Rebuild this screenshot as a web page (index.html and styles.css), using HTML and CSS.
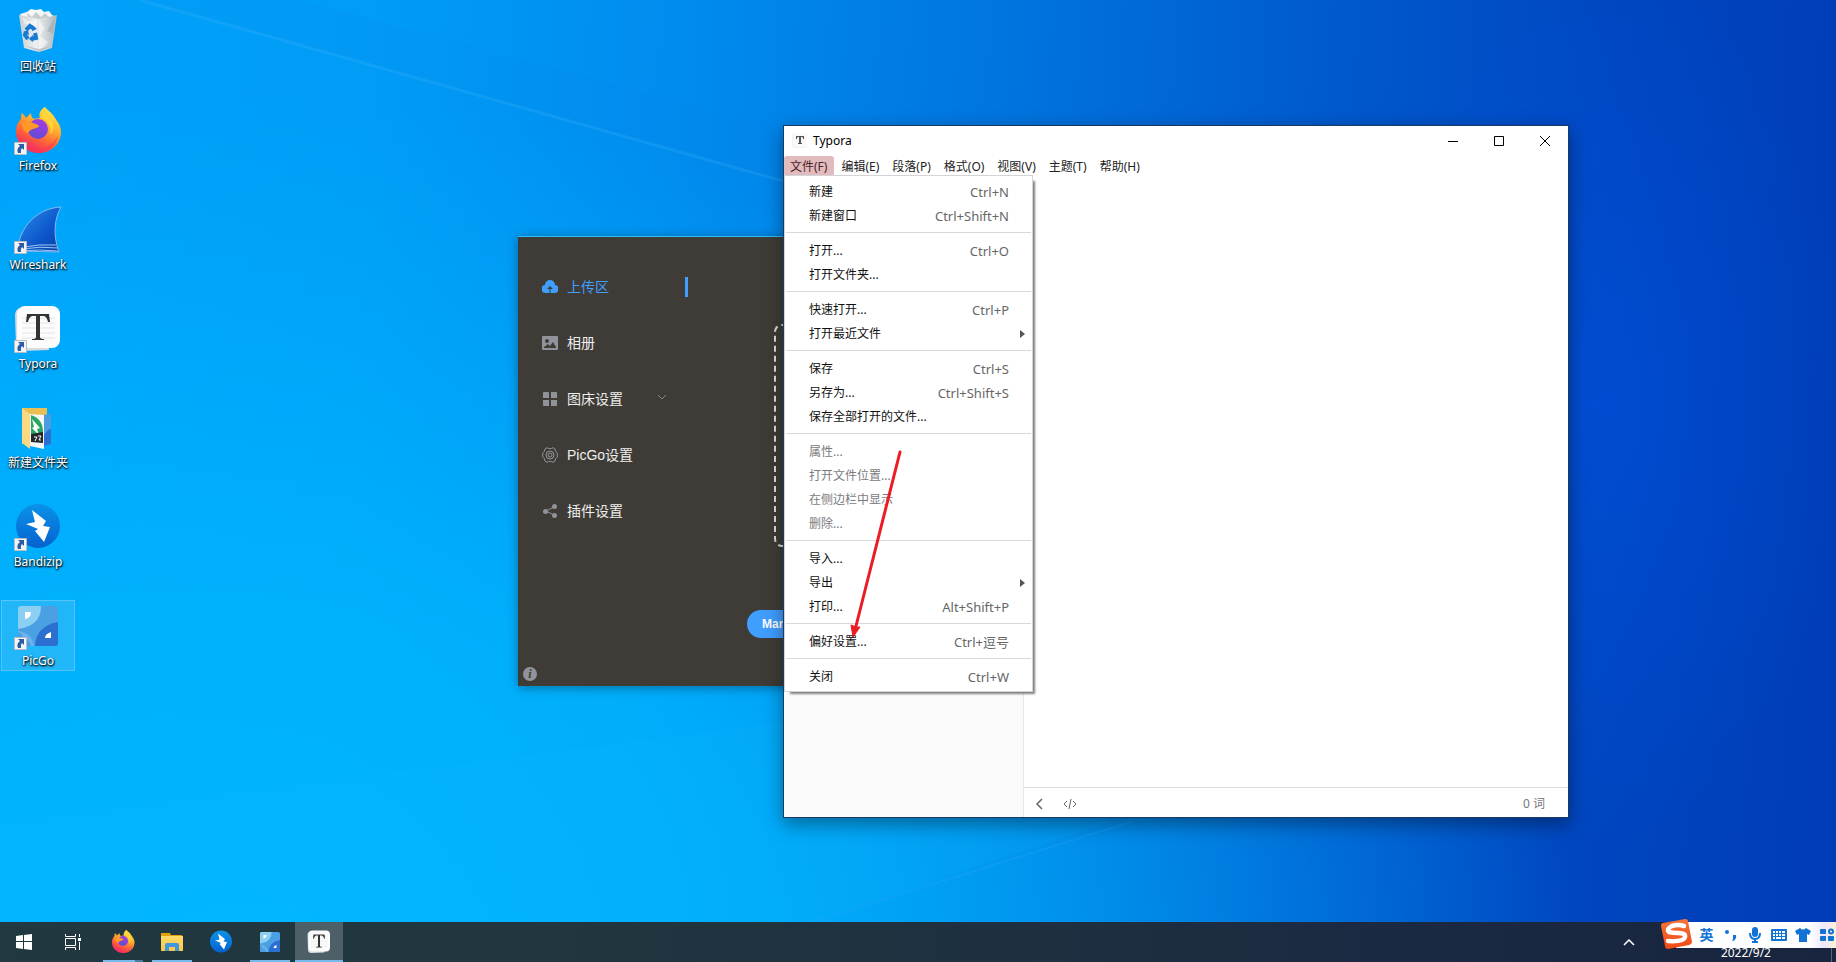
FILE: index.html
```html
<!DOCTYPE html>
<html lang="zh-CN">
<head>
<meta charset="utf-8">
<title>Desktop</title>
<link rel="stylesheet" href="styles.css">
</head>
<body>
<svg class="defs" aria-hidden="true">
  <defs>
    <linearGradient id="ff-body" x1="0.8" y1="0" x2="0.3" y2="1">
      <stop offset="0" stop-color="#fff044"/><stop offset="0.35" stop-color="#ffb52e"/><stop offset="0.65" stop-color="#ff6a35"/><stop offset="1" stop-color="#f0196b"/>
    </linearGradient>
    <linearGradient id="ff-globe" x1="0.8" y1="0" x2="0.2" y2="1">
      <stop offset="0" stop-color="#a63be0"/><stop offset="1" stop-color="#5a4fd6"/>
    </linearGradient>
    <linearGradient id="fin" x1="0" y1="0" x2="1" y2="1">
      <stop offset="0" stop-color="#2f8fe8"/><stop offset="0.6" stop-color="#0c57cc"/><stop offset="1" stop-color="#0b3fa2"/>
    </linearGradient>
    <linearGradient id="bandi" x1="0" y1="0" x2="0" y2="1">
      <stop offset="0" stop-color="#0a92e8"/><stop offset="1" stop-color="#0562cf"/>
    </linearGradient>
    <linearGradient id="bin" x1="0" y1="0" x2="1" y2="0">
      <stop offset="0" stop-color="#c9cfd3"/><stop offset="0.45" stop-color="#eef0f1"/><stop offset="1" stop-color="#aeb7bd"/>
    </linearGradient>
    <linearGradient id="folder" x1="0" y1="0" x2="0" y2="1">
      <stop offset="0" stop-color="#ffd96b"/><stop offset="1" stop-color="#f9c647"/>
    </linearGradient>
    <linearGradient id="sogou" x1="0" y1="0" x2="0" y2="1">
      <stop offset="0" stop-color="#f4743c"/><stop offset="1" stop-color="#f04a14"/>
    </linearGradient>
  </defs>
  <symbol id="i-firefox" viewBox="0 0 48 48">
    <path fill="url(#ff-body)" d="M31 0c2 3 5 4 8 8 2 3 3 4 4 6 3 4 4 8 4 11 0 12-10 21-22 21S2 37 2 25c0-6 2-10 5-13 0-2 0-4 1-6 2 2 3 3 4 5l5-5c0 3 1 5 3 6 3-1 5-1 6-1-2-4 1-9 5-11z"/>
    <path fill="#fb3c52" opacity="0.55" d="M4 31c4 8 12 12 20 11s17-6 20-14c-1 11-10 18-20 18S6 39 4 31z"/>
    <circle cx="24" cy="22" r="10" fill="url(#ff-globe)"/>
    <path fill="#ff9827" d="M8 16c4-2 8-2 11 0 2 1 5 1 6 3-1 2-4 2-6 3-3 1-4 2-5 4-4-1-6-5-6-10z"/>
    <path fill="#ffd43a" d="M31 0c-5 5-4 10 0 13 5 4 7 9 5 15 5-5 4-12 1-16-2-4-6-7-6-12z"/>
  </symbol>
  <symbol id="i-bandizip" viewBox="0 0 48 48">
    <circle cx="24" cy="23" r="22" fill="url(#bandi)"/>
    <path fill="#fff" d="M18 7L32 18 29 23 36 24 30 39 21 28 24 26 12 21 21 19z"/>
  </symbol>
  <symbol id="i-picgo" viewBox="0 0 48 48">
    <rect x="4" y="4" width="40" height="40" rx="3" fill="#4ba0e3"/>
    <path fill="#8bcff2" d="M4 26V7q0-3 3-3h20q0 20-23 23z"/>
    <path fill="#2b6fd0" d="M44 20v21q0 3-3 3H21q1-20 23-24z"/>
    <path fill="#6ab4ec" d="M4 29q14 2 16 15H7q-3 0-3-3z"/>
    <path fill="#fff" d="M11 10h6q0 6-6 7zM37 30v6h-6q0-4 6-6z"/>
    <path fill="#338be0" d="M4 30q5 2 6 7 5 0 7 7H7q-3 0-3-3z" opacity="0.55"/>
  </symbol>
  <symbol id="i-typora" viewBox="0 0 48 48">
    <path fill="#d9dcde" d="M1 10q0-6 6-7l28 1v41L8 46q-5 0-6-6z"/>
    <rect x="3" y="1" width="43" height="42" rx="8" fill="#fcfcfc"/>
    <path stroke="#e4e4e4" d="M8 13h33M8 18h33M8 23h33M8 28h33M8 33h33"/>
    <path fill="#333" d="M13 9h22l1 8h-2q-1-5-4-6h-4v21q0 2 4 2v1H18v-1q4 0 4-2V11h-4q-3 1-4 6h-2z"/>
  </symbol>
  <symbol id="i-shortcut" viewBox="0 0 13 13">
    <path fill="#f4f4f4" stroke="#b9bcc0" d="M.5.5h12v12H.5z"/>
    <path fill="#2a5ca8" d="M4 2h6v6L8 6q-2 2-1 5H4Q2 7 6 4z"/>
  </symbol>
</svg>

<div class="desktop">
  <svg class="beams" viewBox="0 0 1836 962" preserveAspectRatio="none" aria-hidden="true">
    <path d="M140 0L900 214 1100 214 300 0z" fill="#0a84ea" opacity="0.08"/>
    <path d="M140 0L900 214" stroke="#54c2ff" stroke-width="3" opacity="0.18"/>
    <path d="M0 824L784 722 1110 690V822L800 926 770 962H0z" fill="#12bbff" opacity="0.1"/>
    <path d="M800 926L1130 822" stroke="#3aaaf8" stroke-width="2" opacity="0.2"/>
  </svg>

  <nav class="shortcuts" aria-label="桌面">
    <a class="shortcut" href="#recycle">
      <span class="shortcut-art">
        <svg viewBox="0 0 48 48" aria-hidden="true">
          <path fill="#f5f6f6" d="M6 6l7-2 4-3 5 1 5-1 3 3 5-1 3 4 4 2-5 5H11z"/>
          <path fill="#c6ccd0" d="M13 5l5 4 4-5 5 5 4-4 5 5-8 3-14-2z"/>
          <path fill="url(#bin)" d="M5 7l20 4 18-4-5 33-13 4-15-4z"/>
          <path fill="#fff" opacity="0.5" d="M25 12l6 8-5 8 8 6-9 9zM8 9l6 4 9-1v6l-12-2z"/>
          <path fill="#9aa5ac" opacity="0.5" d="M41 9l-8 14 6 3zM12 38l13 3 12-3-12 6z"/>
          <path fill="none" stroke="#1679d2" stroke-width="4" d="M12 22l4-4 4 3M21 25l1 5-5 1M14 31l-3-4 1-3"/>
          <path fill="#1679d2" d="M18 17l5 4-5 2zM19 27v7l-4-3zM9 24l5-2 1 5z"/>
        </svg>
      </span>
      <span class="shortcut-name">回收站</span>
    </a>
    <a class="shortcut" href="#firefox">
      <span class="shortcut-art"><svg aria-hidden="true"><use href="#i-firefox"/></svg><svg class="link-mark" aria-hidden="true"><use href="#i-shortcut"/></svg></span>
      <span class="shortcut-name">Firefox</span>
    </a>
    <a class="shortcut" href="#wireshark">
      <span class="shortcut-art">
        <svg viewBox="0 0 48 48" aria-hidden="true">
          <path fill="url(#fin)" stroke="#7dbdf3" d="M47 1C26 2 8 17 4 40l1 5 40 1C39 30 40 13 47 1z"/>
          <path fill="none" stroke="#9fc8f0" stroke-width="1" d="M10 41q14-3 32-2M8 43q18-3 36-1M6 45q20-2 38 0"/>
        </svg>
        <svg class="link-mark" aria-hidden="true"><use href="#i-shortcut"/></svg>
      </span>
      <span class="shortcut-name">Wireshark</span>
    </a>
    <a class="shortcut" href="#typora">
      <span class="shortcut-art"><svg aria-hidden="true"><use href="#i-typora"/></svg><svg class="link-mark" aria-hidden="true"><use href="#i-shortcut"/></svg></span>
      <span class="shortcut-name">Typora</span>
    </a>
    <a class="shortcut" href="#folder">
      <span class="shortcut-art">
        <svg viewBox="0 0 48 48" aria-hidden="true">
          <path fill="#e9bf55" d="M8 4h25v36H8z"/>
          <path fill="#4a9be0" d="M28 11l9-1v30l-9 3z"/>
          <path fill="#2b6fd0" d="M30 31q4-6 7-6v15l-7 2z"/>
          <path fill="#f6f8f8" d="M15 10l15 1v34l-14-3z"/>
          <path fill="#27a862" d="M17 11q12 4 12 17v2H17z"/>
          <path fill="#fff" d="M18 15l8 9-3 1 2 6-7-7 2-1z"/>
          <path fill="#24272c" d="M17 30l12-2v11l-12-1z"/>
          <path fill="none" stroke="#fff" d="M20 33h3l-2 4M24 32h3l-2 4h2"/>
          <path fill="#fbd982" d="M8 4l8 6v35l-8-6z"/>
        </svg>
      </span>
      <span class="shortcut-name">新建文件夹</span>
    </a>
    <a class="shortcut" href="#bandizip">
      <span class="shortcut-art"><svg aria-hidden="true"><use href="#i-bandizip"/></svg><svg class="link-mark" aria-hidden="true"><use href="#i-shortcut"/></svg></span>
      <span class="shortcut-name">Bandizip</span>
    </a>
    <a class="shortcut is-selected" href="#picgo">
      <span class="shortcut-art"><svg aria-hidden="true"><use href="#i-picgo"/></svg><svg class="link-mark" aria-hidden="true"><use href="#i-shortcut"/></svg></span>
      <span class="shortcut-name">PicGo</span>
    </a>
  </nav>

  <section class="picgo" aria-label="PicGo">
    <aside class="picgo-side">
      <nav class="picgo-nav">
        <a class="picgo-item is-active" href="#upload">
          <svg viewBox="0 0 16 16" aria-hidden="true"><path fill="currentColor" fill-rule="evenodd" d="M3 6a5 5 0 0 1 10 0 4 4 0 0 1-1 8H4A4 4 0 0 1 3 6zM8 7l-3 3h2.500v4h1v-4H11z"/></svg>
          <span>上传区</span>
        </a>
        <a class="picgo-item" href="#album">
          <svg viewBox="0 0 16 16" aria-hidden="true"><path fill="currentColor" fill-rule="evenodd" d="M1 1h14q1 0 1 1v12q0 1-1 1H1q-1 0-1-1V2q0-1 1-1zM5 4a2 2 0 1 0 0 4 2 2 0 0 0 0-4zM2 13h12v-1l-3-5-3 4-2-2-4 3z"/></svg>
          <span>相册</span>
        </a>
        <a class="picgo-item" href="#hosts">
          <svg viewBox="0 0 16 16" aria-hidden="true"><path fill="currentColor" d="M2 1h4q1 0 1 1v5H1V2q0-1 1-1zM9 1h5q1 0 1 1v5H9zM1 9h6v6H2q-1 0-1-1zM9 9h6v5q0 1-1 1H9z"/></svg>
          <span>图床设置</span>
          <svg class="picgo-more" viewBox="0 0 10 6" aria-hidden="true"><path d="M1 1l4 4 4-4" fill="none" stroke="#88888b"/></svg>
        </a>
        <a class="picgo-item" href="#settings">
          <svg viewBox="0 0 16 16" aria-hidden="true"><g fill="none" stroke="currentColor"><path d="M5 .7q1.500 1 3 1t3-1l2 1.300q0 3 2.500 4.200-.7 1.800 0 3.600Q13 11 13 14l-2 1.300q-1.500-1-3-1t-3 1L3 14q0-3-2.500-4.200.7-1.800 0-3.600Q3 5 3 2z"/><circle cx="8" cy="8" r="4"/><circle cx="8" cy="8" r="2"/></g></svg>
          <span>PicGo设置</span>
        </a>
        <a class="picgo-item" href="#plugins">
          <svg viewBox="0 0 16 16" aria-hidden="true"><path d="M12 4L4 8l8 4" fill="none" stroke="currentColor"/><g fill="currentColor"><circle cx="12.500" cy="3.500" r="2.500"/><circle cx="3.500" cy="8.500" r="2.500"/><circle cx="12.500" cy="12.500" r="2.500"/></g></svg>
          <span>插件设置</span>
        </a>
      </nav>
      <button class="picgo-info" type="button" aria-label="信息">i</button>
    </aside>
    <div class="picgo-main">
      <div class="picgo-drop"></div>
      <button class="picgo-format" type="button">Markdown</button>
    </div>
  </section>

  <section class="typora" aria-label="Typora">
    <header class="title-bar">
      <svg class="title-icon" viewBox="0 0 16 16" aria-hidden="true"><rect x="0" y="0" width="15" height="15" rx="3" fill="#f1f1f1"/><rect x="1" y="0" width="14" height="14" rx="3" fill="#fafafa"/><path fill="#555" d="M4 3h8v3h-1q0-2-1-2H9v6h1v1H6v-1h1V4H6Q5 4 5 6H4z"/></svg>
      <h1 class="title-text">Typora</h1>
      <div class="window-buttons">
        <button type="button" aria-label="最小化"><svg viewBox="0 0 10 10"><path d="M0 5.500h10"/></svg></button>
        <button type="button" aria-label="最大化"><svg viewBox="0 0 10 10"><path d="M.5.5h9v9h-9z"/></svg></button>
        <button type="button" aria-label="关闭窗口"><svg viewBox="0 0 10 10"><path d="M0 0l10 10M10 0L0 10"/></svg></button>
      </div>
    </header>
    <div class="menu-bar">
      <div class="menu-root">
        <button class="menu-tab is-open" type="button">文件(F)</button>
        <div class="menu" role="menu">
          <div class="menu-group">
            <button type="button" role="menuitem"><span>新建</span><kbd>Ctrl+N</kbd></button>
            <button type="button" role="menuitem"><span>新建窗口</span><kbd>Ctrl+Shift+N</kbd></button>
          </div>
          <div class="menu-group">
            <button type="button" role="menuitem"><span>打开...</span><kbd>Ctrl+O</kbd></button>
            <button type="button" role="menuitem"><span>打开文件夹...</span></button>
          </div>
          <div class="menu-group">
            <button type="button" role="menuitem"><span>快速打开...</span><kbd>Ctrl+P</kbd></button>
            <button class="has-submenu" type="button" role="menuitem"><span>打开最近文件</span></button>
          </div>
          <div class="menu-group">
            <button type="button" role="menuitem"><span>保存</span><kbd>Ctrl+S</kbd></button>
            <button type="button" role="menuitem"><span>另存为...</span><kbd>Ctrl+Shift+S</kbd></button>
            <button type="button" role="menuitem"><span>保存全部打开的文件...</span></button>
          </div>
          <div class="menu-group">
            <button type="button" role="menuitem" disabled><span>属性...</span></button>
            <button type="button" role="menuitem" disabled><span>打开文件位置...</span></button>
            <button type="button" role="menuitem" disabled><span>在侧边栏中显示</span></button>
            <button type="button" role="menuitem" disabled><span>删除...</span></button>
          </div>
          <div class="menu-group">
            <button type="button" role="menuitem"><span>导入...</span></button>
            <button class="has-submenu" type="button" role="menuitem"><span>导出</span></button>
            <button type="button" role="menuitem"><span>打印...</span><kbd>Alt+Shift+P</kbd></button>
          </div>
          <div class="menu-group">
            <button type="button" role="menuitem"><span>偏好设置...</span><kbd>Ctrl+逗号</kbd></button>
          </div>
          <div class="menu-group">
            <button type="button" role="menuitem"><span>关闭</span><kbd>Ctrl+W</kbd></button>
          </div>
        </div>
      </div>
      <button class="menu-tab" type="button">编辑(E)</button>
      <button class="menu-tab" type="button">段落(P)</button>
      <button class="menu-tab" type="button">格式(O)</button>
      <button class="menu-tab" type="button">视图(V)</button>
      <button class="menu-tab" type="button">主题(T)</button>
      <button class="menu-tab" type="button">帮助(H)</button>
    </div>
    <div class="typora-body">
      <aside class="typora-side"></aside>
      <div class="typora-pane">
        <main class="typora-page"></main>
        <footer class="status-bar">
          <button type="button" aria-label="侧边栏"><svg width="14" height="14" viewBox="0 0 14 14"><path d="M9 2L4 7l5 5" stroke-width="1.500"/></svg></button>
          <button type="button" aria-label="源代码模式"><svg width="14" height="14" viewBox="0 0 14 14"><path d="M4 4L1 7l3 3M10 4l3 3-3 3M8 2L6 12"/></svg></button>
          <button class="word-count" type="button">0 词</button>
        </footer>
      </div>
    </div>
  </section>

  <svg class="pointer" viewBox="0 0 60 192" aria-hidden="true">
    <path d="M54 4L10 178" stroke="#ec1c24" stroke-width="3" stroke-linecap="round"/>
    <path d="M7 189L5 177l5 2 4 0z" fill="#ec1c24" stroke="#ec1c24" stroke-width="1"/>
  </svg>

  <footer class="taskbar">
    <div class="task-list">
      <button class="task" type="button" aria-label="开始"><svg width="16" height="16" viewBox="0 0 16 16"><path fill="#fff" d="M0 2l7-1v6H0zM8 1l8-1v7H8zM0 8h7v7l-7-1zM8 8h8v8l-8-1z"/></svg></button>
      <button class="task" type="button" aria-label="任务视图"><svg width="18" height="16" viewBox="0 0 18 16"><path fill="none" stroke="#fff" d="M1.500 0v2.500h10V0M1.500 16v-2.500h10V16M1.500 4.500h10v7h-10zM15.500 0v3M15.500 8v8"/><path fill="#fff" d="M14 4h3v3h-3z"/></svg></button>
      <button class="task is-running is-stacked" type="button" aria-label="Firefox"><svg width="24" height="24"><use href="#i-firefox"/></svg></button>
      <button class="task is-running" type="button" aria-label="文件资源管理器"><svg width="24" height="24" viewBox="0 0 24 24"><path fill="#e3a008" d="M1 3h9l1 2h11v5H1z"/><path fill="url(#folder)" d="M1 6h22v15H1z"/><path fill="#3f97e0" d="M5 21v-6q0-2 2-2h10q2 0 2 2v6h-4v-4H9v4z"/></svg></button>
      <button class="task" type="button" aria-label="Bandizip"><svg width="24" height="24"><use href="#i-bandizip"/></svg></button>
      <button class="task is-running" type="button" aria-label="PicGo"><svg width="24" height="24"><use href="#i-picgo"/></svg></button>
      <button class="task is-running is-current" type="button" aria-label="Typora"><svg width="24" height="24"><use href="#i-typora"/></svg></button>
    </div>
    <div class="tray">
      <button class="tray-more" type="button" aria-label="显示隐藏的图标"><svg width="12" height="7" viewBox="0 0 12 7"><path d="M1 6l5-5 5 5" fill="none" stroke="#fff" stroke-width="1.500"/></svg></button>
      <time class="tray-date" datetime="2022-09-02">2022/9/2</time>
      <span class="tray-edge"></span>
    </div>
  </footer>

  <div class="ime" role="toolbar" aria-label="输入法">
    <svg class="ime-logo" viewBox="0 0 32 32" aria-hidden="true">
      <path fill="url(#sogou)" d="M3 5l22-4q3 0 3 2l4 21q0 2-3 3L8 31q-3 0-3-3L1 8q0-3 2-3z"/>
      <path fill="none" stroke="#fff" stroke-width="4.500" stroke-linecap="round" d="M24 8q-6-2-12 0-6 3-3 6 3 1 9 1 8 0 7 4-1 5-17 4"/>
    </svg>
    <button class="ime-lang" type="button">英</button>
    <button type="button" aria-label="标点"><svg width="14" height="14" viewBox="0 0 14 14"><circle cx="3" cy="4" r="2"/><path d="M9 7h3q1 4-3 6l-1-1q2-1 1-2z"/></svg></button>
    <button type="button" aria-label="语音"><svg width="14" height="16" viewBox="0 0 14 16"><rect x="4" y="0" width="6" height="10" rx="3"/><path d="M1 6h2q0 5 4 5t4-5h2q0 6-5 7v1h2v2H4v-2h2v-1Q1 12 1 6z"/></svg></button>
    <button type="button" aria-label="键盘"><svg width="16" height="14" viewBox="0 0 16 14"><path fill-rule="evenodd" d="M1 1h14q1 0 1 1v10q0 1-1 1H1q-1 0-1-1V2q0-1 1-1zm1 2v2h2V3zm3 0v2h2V3zm3 0v2h2V3zm3 0v2h3V3zM2 6v2h2V6zm3 0v2h2V6zm3 0v2h2V6zm3 0v2h3V6zM2 9v2h2V9zm3 0v2h5V9zm6 0v2h3V9z"/></svg></button>
    <button type="button" aria-label="皮肤"><svg width="16" height="14" viewBox="0 0 16 14"><path d="M5 0q3 3 6 0l5 3-2 4-2-1v8H4V6L2 7 0 3z"/></svg></button>
    <button type="button" aria-label="工具箱"><svg width="14" height="14" viewBox="0 0 14 14"><path d="M1 1h4q1 0 1 1v4H1q-1 0-1-1V2q0-1 1-1zM1 8h5v4q0 1-1 1H1q-1 0-1-1V9q0-1 1-1zM8 8h5q1 0 1 1v3q0 1-1 1H9q-1 0-1-1z"/><circle cx="11" cy="3.500" r="2" fill="none" stroke="#1173d4" stroke-width="2"/></svg></button>
  </div>
</div>
</body>
</html>
```

FILE: styles.css
```css
* {
  box-sizing: border-box;
}

body {
  margin: 0;
  font-family: "Noto Sans", "Noto Sans CJK SC", sans-serif;
  font-size: 12px;
  line-height: 16px;
}

button {
  margin: 0;
  padding: 0;
  border: 0;
  background: none;
  color: inherit;
  font: inherit;
}

a {
  color: inherit;
  text-decoration: none;
}

.defs {
  position: absolute;
  width: 0;
  height: 0;
}

.desktop {
  position: relative;
  display: flex;
  flex-direction: column;
  height: 100vh;
  overflow: hidden;
  background:
    radial-gradient(ellipse 14% 46% at 87% 42%, rgba(0, 84, 232, 0.45), rgba(0, 84, 232, 0)),
    radial-gradient(ellipse 72% 90% at 14% 100%, rgba(0, 182, 255, 1), rgba(0, 182, 255, 0.8) 40%, rgba(0, 170, 250, 0)),
    linear-gradient(93deg, #00a2fa 0%, #009cf6 20%, #008cee 36%, #0074de 54%, #0058cc 72%, #0046c0 86%, #003cb6 100%);
}

.beams {
  position: absolute;
  inset: 0;
  width: 100%;
  height: 100%;
}

/* Desktop shortcuts */

.shortcuts {
  position: relative;
  flex: 1;
  display: flex;
  flex-direction: column;
  align-items: flex-start;
  gap: 28px;
  padding: 6px 1px;
}

.shortcut {
  display: flex;
  flex-direction: column;
  align-items: center;
  gap: 3px;
  width: 74px;
  height: 71px;
  padding: 1px;
  border: 1px solid transparent;
  color: #fff;
  text-shadow: 1px 1px 2px #000, 0 1px 2px rgba(0, 0, 0, 0.8);
  white-space: nowrap;
}

.shortcut.is-selected {
  border-color: #55c4fb;
  background: rgba(110, 196, 240, 0.3);
}

.shortcut-art {
  position: relative;
  width: 48px;
  height: 48px;
}

.shortcut-art svg {
  display: block;
  width: 48px;
  height: 48px;
}

.shortcut-art .link-mark {
  position: absolute;
  left: 0;
  bottom: 0;
  width: 13px;
  height: 13px;
}

/* PicGo window */

.picgo {
  position: absolute;
  left: 518px;
  top: 236px;
  display: flex;
  width: 800px;
  height: 450px;
  border-top: 1px solid #2fc0f0;
  background: #3f3c37;
  box-shadow: 0 2px 10px rgba(0, 0, 0, 0.35);
  color: #eee;
  font-family: "Liberation Sans", "Noto Sans CJK SC", sans-serif;
  font-size: 14px;
}

.picgo-side {
  display: flex;
  flex-direction: column;
  justify-content: space-between;
  align-items: flex-start;
  width: 170px;
  padding: 22px 0 5px;
}

.picgo-nav {
  width: 100%;
}

.picgo-item {
  display: flex;
  align-items: center;
  gap: 9px;
  height: 56px;
  padding-left: 24px;
}

.picgo-item svg {
  width: 16px;
  height: 16px;
  color: #909399;
}

.picgo-item .picgo-more {
  width: 10px;
  height: 6px;
  margin: 0 21px 4px auto;
}

.picgo-item.is-active,
.picgo-item.is-active svg {
  color: #409eff;
}

.picgo-item.is-active::after {
  content: "";
  width: 3px;
  height: 20px;
  margin-left: auto;
  background: #409eff;
}

.picgo-info {
  width: 14px;
  height: 14px;
  margin-left: 5px;
  border-radius: 50%;
  background: #909399;
  color: #3f3c37;
  font: italic bold 12px/14px "Liberation Serif", serif;
}

.picgo-main {
  flex: 1;
  display: flex;
  flex-direction: column;
  align-items: flex-start;
  gap: 63px;
  padding: 87px 86px 0;
}

.picgo-drop {
  align-self: stretch;
  height: 223px;
  border: 2px dashed #ddd;
  border-radius: 8px;
}

.picgo-format {
  height: 28px;
  margin-left: -27px;
  padding: 0 15px;
  border-radius: 14px;
  background: #409eff;
  color: #fff;
  font-size: 12px;
  font-weight: bold;
}

/* Typora window */

.typora {
  position: absolute;
  left: 783px;
  top: 125px;
  display: flex;
  flex-direction: column;
  width: 786px;
  height: 693px;
  border: 1px solid #1b3a63;
  background: #fff;
  box-shadow: 0 6px 18px rgba(0, 0, 0, 0.4);
  color: #222;
}

.title-bar {
  display: flex;
  align-items: center;
  height: 30px;
  padding-left: 8px;
}

.title-icon {
  width: 16px;
  height: 16px;
}

.title-text {
  flex: 1;
  margin: 0 0 0 5px;
  color: #000;
  font-size: 12px;
  font-weight: normal;
}

.window-buttons {
  display: flex;
}

.window-buttons button {
  display: grid;
  place-items: center;
  width: 46px;
  height: 28px;
}

.window-buttons svg {
  width: 10px;
  height: 10px;
  overflow: visible;
  fill: none;
  stroke: #000;
}

.menu-bar {
  display: flex;
  gap: 1px;
  height: 20px;
}

.menu-root {
  position: relative;
}

.menu-tab {
  height: 20px;
  padding: 2px 6px 0;
  border-radius: 3px 3px 0 0;
  white-space: nowrap;
}

.menu-tab.is-open {
  padding-right: 7px;
  background: #e1bbbe;
  color: #4b2226;
}

.menu {
  position: absolute;
  z-index: 1;
  left: 0;
  top: 19px;
  width: 249px;
  padding: 3px 1px;
  border: 1px solid #d4d4d6;
  background: #fff;
  box-shadow: 4px 4px 2px -2px #808080;
}

.menu-group + .menu-group {
  margin-top: 5px;
  padding-top: 5px;
  border-top: 1px solid #d9d9dc;
}

.menu-group button {
  display: flex;
  align-items: center;
  width: 100%;
  height: 24px;
  padding: 2px 22px 0 23px;
  color: #111;
  text-align: left;
  white-space: nowrap;
}

.menu-group button:disabled {
  color: #7b7b7e;
}

.menu-group kbd {
  margin-left: auto;
  color: #666;
  font: inherit;
  font-size: 13px;
}

.menu-group .has-submenu {
  padding-right: 6px;
}

.has-submenu::after {
  content: "";
  margin-left: auto;
  border: solid transparent;
  border-width: 4px 0 4px 5px;
  border-left-color: #555;
}

.typora-body {
  flex: 1;
  display: flex;
}

.typora-side {
  width: 240px;
  border-right: 1px solid #e6e6e6;
  background: #fafafa;
}

.typora-pane {
  flex: 1;
  display: flex;
  flex-direction: column;
}

.typora-page {
  flex: 1;
}

.status-bar {
  display: flex;
  align-items: center;
  gap: 16px;
  height: 30px;
  padding: 2px 23px 0 9px;
  border-top: 1px solid #ddd;
  color: #777;
}

.status-bar svg {
  display: block;
  fill: none;
  stroke: #666;
}

.word-count {
  margin-left: auto;
}

.pointer {
  position: absolute;
  z-index: 2;
  left: 846px;
  top: 448px;
  width: 60px;
  height: 192px;
}

/* Taskbar */

.taskbar {
  position: relative;
  display: flex;
  justify-content: space-between;
  height: 40px;
  background: linear-gradient(90deg, #213841, #21363f 30%, #1e3040 55%, #1a2842 80%, #19253f);
}

.task-list {
  display: flex;
  gap: 1px;
}

.task {
  position: relative;
  display: grid;
  place-items: center;
  width: 48px;
  height: 40px;
}

.task.is-running::after {
  content: "";
  position: absolute;
  inset: auto 4px 0;
  height: 2px;
  background: #76b9ed;
}

.task.is-stacked {
  margin-left: 1px;
}

.task.is-stacked::after {
  background: linear-gradient(90deg, #76b9ed 80%, #4b7c9d 80%);
}

.task.is-current {
  background: #4d6067;
}

.task.is-current::after {
  inset: auto 0 0;
}

.tray {
  display: flex;
  align-items: flex-end;
  color: #fff;
}

.tray-more {
  display: grid;
  place-items: center;
  align-self: stretch;
  width: 24px;
  margin-right: 80px;
}

.tray-date {
  padding-bottom: 1px;
}

.tray-edge {
  align-self: stretch;
  margin: 0 4px 0 60px;
  border-left: 1px solid #5b6677;
}

/* Input method toolbar */

.ime {
  position: absolute;
  right: 0;
  bottom: 14px;
  display: flex;
  align-items: center;
  gap: 9px;
  height: 26px;
  padding-right: 2px;
  background: linear-gradient(90deg, transparent 16px, #fff 16px, #fff 85%, #eee8fb 93%, #fbf1d9);
}

.ime button {
  display: grid;
  place-items: center;
  width: 15px;
  height: 26px;
  color: #1173d4;
}

.ime button svg {
  fill: currentColor;
}

.ime .ime-lang {
  font-size: 14px;
  font-weight: bold;
}

.ime-logo {
  width: 32px;
  height: 32px;
  margin: 0 -2px 2px 0;
}
```
